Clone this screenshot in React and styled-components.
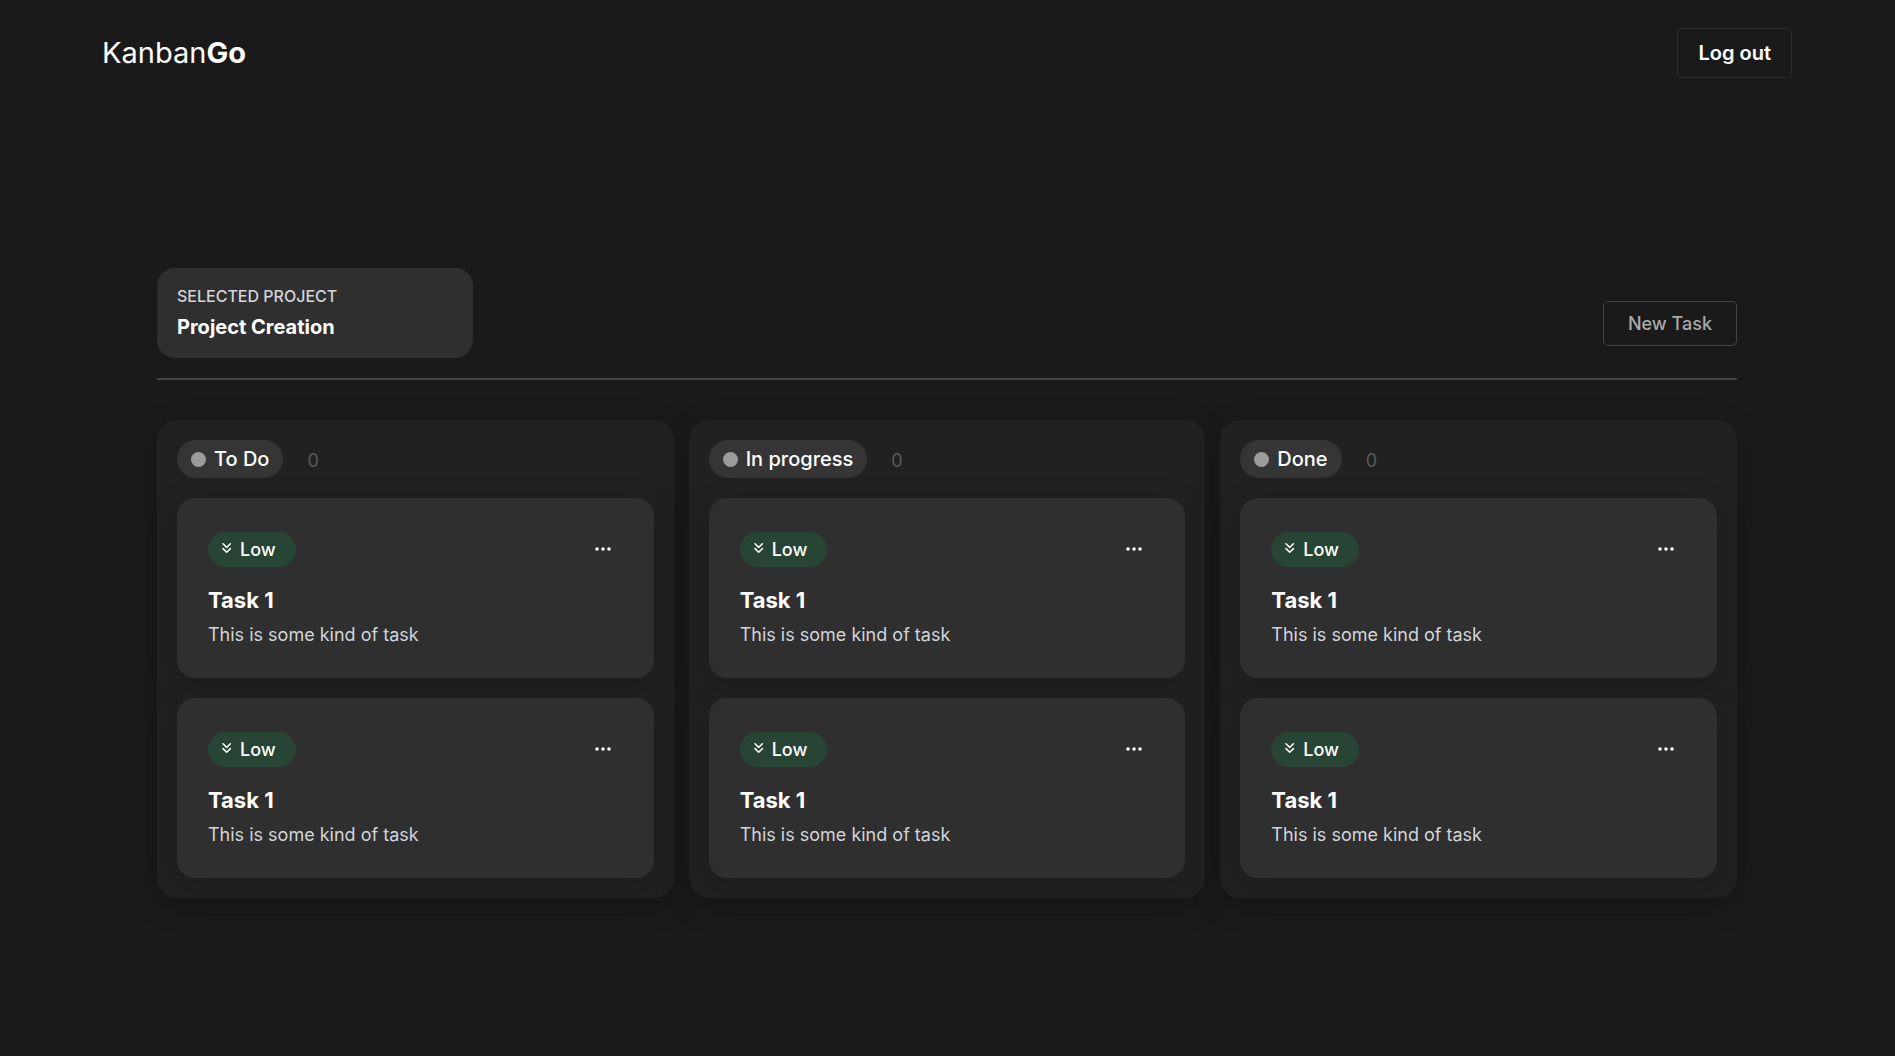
import React from 'react';
import styled, { createGlobalStyle } from 'styled-components';

const GlobalStyle = createGlobalStyle`
  *, *::before, *::after { box-sizing: border-box; }
  body {
    margin: 0;
    background: #1a1a1a;
    color: #fff;
    font-family: Inter, "Liberation Sans", sans-serif;
  }
  h1, h2, h3, p { margin: 0; }
  button { font-family: inherit; cursor: pointer; }
`;

const Page = styled.div`
  min-height: 100vh;
`;

const Header = styled.header`
  display: flex;
  align-items: center;
  justify-content: space-between;
  padding: 28px 103px 28px 102px;
`;

const Logo = styled.a`
  color: #fff;
  font-size: 29px;
  line-height: 36px;
  font-weight: 400;
  text-decoration: none;
  strong { font-weight: 700; }
`;

const OutlineButton = styled.button`
  height: ${({ $large }) => ($large ? '50px' : '45px')};
  padding: ${({ $large }) => ($large ? '0 20px' : '0 24px')};
  border: 1px solid ${({ $large }) => ($large ? '#2f2f2f' : '#444')};
  border-radius: 5px;
  background: transparent;
  color: ${({ $large }) => ($large ? '#fff' : '#aaa')};
  font-size: ${({ $large }) => ($large ? '20px' : '18px')};
  font-weight: ${({ $large }) => ($large ? 600 : 500)};
`;

const Main = styled.main`
  padding: 162px 158px 0 157px;
`;

const ProjectBar = styled.section`
  display: flex;
  align-items: flex-end;
  justify-content: space-between;
  padding-bottom: 20px;
  border-bottom: 2px solid #444;
`;

const ProjectCard = styled.div`
  width: 20%;
  padding: 16px 20px;
  border-radius: 18px;
  background: #2f2f2f;
`;

const ProjectLabel = styled.p`
  color: #d1d5db;
  font-size: 16px;
  line-height: 24px;
  font-weight: 500;
  text-transform: uppercase;
`;

const ProjectName = styled.h1`
  margin-top: 4px;
  font-size: 20px;
  line-height: 30px;
  font-weight: 700;
`;

const Actions = styled.div`
  padding-bottom: 12px;
`;

const Board = styled.div`
  display: grid;
  grid-template-columns: repeat(3, minmax(0, 1fr));
  gap: 15px;
  margin-top: 40px;
`;

const Column = styled.section`
  display: flex;
  flex-direction: column;
  gap: 20px;
  padding: 20px;
  border-radius: 20px;
  background: #212121;
  box-shadow: 0 8px 32px rgba(0, 0, 0, 0.15);
`;

const ColumnHeader = styled.header`
  display: flex;
  align-items: center;
  gap: 24px;
`;

const StatusPill = styled.h2`
  display: flex;
  align-items: center;
  gap: 8px;
  height: 38px;
  padding: 0 14px;
  border-radius: 19px;
  background: #353535;
  font-size: 20px;
  font-weight: 500;
`;

const Dot = styled.span`
  width: 15px;
  height: 15px;
  border-radius: 50%;
  background: #9b9b9b;
`;

const Count = styled.span`
  padding-top: 4px;
  color: #5a5a5a;
  font-size: 18px;
  line-height: 24px;
`;

const Card = styled.article`
  padding: 34px 31px 29px;
  border-radius: 18px;
  background: #2f2f2f;
  box-shadow: 0 8px 32px rgba(0, 0, 0, 0.15);
`;

const CardTop = styled.div`
  display: flex;
  align-items: center;
  justify-content: space-between;
`;

const Priority = styled.span`
  display: flex;
  align-items: center;
  gap: 7px;
  height: 35px;
  padding: 0 20px 0 11px;
  border-radius: 18px;
  background: #284434;
  font-size: 18px;
  font-weight: 500;
  svg { margin-bottom: 4px; }
`;

const MenuButton = styled.button`
  display: flex;
  padding: 7px 10px;
  border: 0;
  background: transparent;
  color: #fff;
`;

const TaskTitle = styled.h3`
  margin-top: 17px;
  font-size: 22px;
  line-height: 32px;
  font-weight: 700;
`;

const TaskText = styled.p`
  margin-top: 5px;
  color: #d1d5db;
  font-size: 18px;
  line-height: 28px;
`;

const ChevronsDown = () => (
  <svg width="14" height="14" viewBox="0 0 14 14" fill="none" stroke="currentColor" strokeWidth="1.5" strokeLinecap="round" strokeLinejoin="round" aria-hidden="true">
    <path d="M4 2.8l3.7 3.6 3.7-3.6M4 7.6l3.7 3.6 3.7-3.6" />
  </svg>
);

const Ellipsis = () => (
  <svg width="20" height="20" viewBox="0 0 20 20" fill="currentColor" aria-hidden="true">
    <circle cx="4" cy="9" r="1.8" />
    <circle cx="10" cy="9" r="1.8" />
    <circle cx="16" cy="9" r="1.8" />
  </svg>
);

const task = { priority: 'Low', title: 'Task 1', text: 'This is some kind of task' };
const columns = [
  { name: 'To Do', tasks: [task, task] },
  { name: 'In progress', tasks: [task, task] },
  { name: 'Done', tasks: [task, task] },
];

function TaskCard({ priority, title, text }) {
  return (
    <Card>
      <CardTop>
        <Priority><ChevronsDown />{priority}</Priority>
        <MenuButton type="button" aria-label="Task options"><Ellipsis /></MenuButton>
      </CardTop>
      <TaskTitle>{title}</TaskTitle>
      <TaskText>{text}</TaskText>
    </Card>
  );
}

export default function App() {
  return (
    <Page>
      <GlobalStyle />
      <Header>
        <Logo href="#">Kanban<strong>Go</strong></Logo>
        <OutlineButton type="button" $large>Log out</OutlineButton>
      </Header>
      <Main>
        <ProjectBar>
          <ProjectCard>
            <ProjectLabel>Selected project</ProjectLabel>
            <ProjectName>Project Creation</ProjectName>
          </ProjectCard>
          <Actions><OutlineButton type="button">New Task</OutlineButton></Actions>
        </ProjectBar>
        <Board>
          {columns.map((column) => (
            <Column key={column.name}>
              <ColumnHeader>
                <StatusPill><Dot />{column.name}</StatusPill>
                <Count>0</Count>
              </ColumnHeader>
              {column.tasks.map((item, index) => <TaskCard key={index} {...item} />)}
            </Column>
          ))}
        </Board>
      </Main>
    </Page>
  );
}
